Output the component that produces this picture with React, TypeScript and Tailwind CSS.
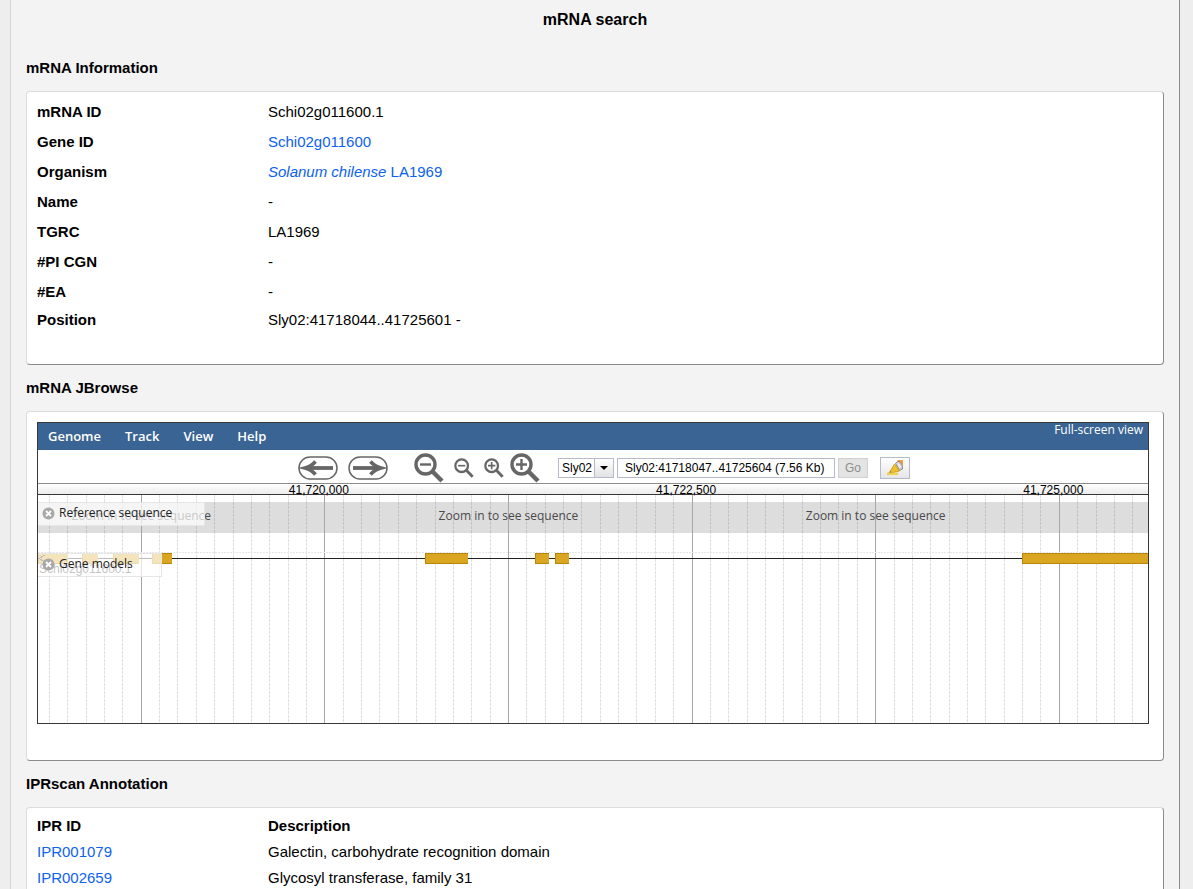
import type { ReactNode } from "react";

const START = 41718047;
const END = 41725604;

// position of a base inside the visible range
const pct = (bp: number) => `${((bp - START) / (END - START)) * 100}%`;
const span = (a: number, b: number) => `${((b - a) / (END - START)) * 100}%`;

const range = (from: number, step: number) => {
  const out: number[] = [];
  for (let bp = from; bp < END; bp += step) out.push(bp);
  return out;
};

const majorTicks = range(41718750, 1250);
const minorTicks = range(41718125, 125).filter((bp) => !majorTicks.includes(bp));
const rulerTicks = range(41720000, 2500);
const sequenceBlocks = range(41718750, 2500);

const exons = [
  [41718047, 41718251],
  [41718347, 41718455],
  [41718558, 41718735],
  [41718823, 41718959],
  [41720682, 41720974],
  [41721431, 41721526],
  [41721567, 41721662],
  [41724746, 41725604],
];

const info: { label: string; value: ReactNode }[] = [
  { label: "mRNA ID", value: "Schi02g011600.1" },
  { label: "Gene ID", value: <Link>Schi02g011600</Link> },
  {
    label: "Organism",
    value: (
      <Link>
        <i>Solanum chilense</i> LA1969
      </Link>
    ),
  },
  { label: "Name", value: "-" },
  { label: "TGRC", value: "LA1969" },
  { label: "#PI CGN", value: "-" },
  { label: "#EA", value: "-" },
];

const iprscan = [
  { id: "IPR001079", description: "Galectin, carbohydrate recognition domain" },
  { id: "IPR002659", description: "Glycosyl transferase, family 31" },
];

function Link({ children }: { children: ReactNode }) {
  return (
    <a href="#" className="text-[#0d62ee]">
      {children}
    </a>
  );
}

function Section({ title, className, children }: { title: string; className: string; children: ReactNode }) {
  return (
    <section>
      <h2 className="font-bold leading-[46px]">{title}</h2>
      <div
        className={`rounded border border-t-[#dcdcdc] border-l-[#dcdcdc] border-r-[#8c8c8c] border-b-[#8c8c8c] bg-white px-2.5 ${className}`}
      >
        {children}
      </div>
    </section>
  );
}

function PanIcon({ flip }: { flip?: boolean }) {
  return (
    <svg width="40" height="24" viewBox="0 0 40 24" fill="none" stroke="#666" className={flip ? "-scale-x-100" : ""}>
      <rect x="1" y="1" width="38" height="22" rx="11" strokeWidth="1.5" />
      <path d="M35 12H8" strokeWidth="3.8" />
      <path d="M17.5 5.5C15 8.5 11.5 10.8 7 12C11.5 13.2 15 15.5 17.5 18.5" strokeWidth="3.6" />
    </svg>
  );
}

function ZoomIcon({ size, plus }: { size: number; plus?: boolean }) {
  return (
    <svg width={size} height={size} viewBox="0 0 30 30" fill="none" stroke="#666">
      <circle cx="11.5" cy="11.5" r="9.5" strokeWidth="3.4" />
      <path d="M18.5 18.5L28 28" strokeWidth="4.4" />
      <path d={plus ? "M6 11.5H17M11.5 6V17" : "M6 11.5H17"} strokeWidth="2.4" />
    </svg>
  );
}

function HighlighterIcon() {
  return (
    <svg width="18" height="16" viewBox="0 0 18 16">
      <path d="M11 0H17V6Z" fill="#f79a3c" />
      <path d="M9.5 3.5Q11 1 13 1.5Q17 4 16.5 9L13.5 10.5Z" fill="#cfcfcf" stroke="#8a8a8a" strokeWidth="1" />
      <path d="M12 3.5L14.5 7.5" stroke="#f4f4f4" strokeWidth="1.5" />
      <path d="M8.5 4L13.5 11L5.5 12.8L4 11.5Z" fill="#efc02c" stroke="#c89a1c" strokeWidth="0.8" />
      <path d="M4.5 10.5L6 12.8L2 13.5Z" fill="#a8913a" />
      <path d="M1 13.8H12" stroke="#f3cf45" strokeWidth="2.2" />
    </svg>
  );
}

function TrackLabel({ name, className }: { name: string; className: string }) {
  return (
    <div
      className={`absolute left-0 flex h-6 items-center gap-1 border border-l-0 border-[#e6e6e6] bg-white/70 pb-0.5 pl-1 text-[#222] ${className}`}
    >
      <button type="button" aria-label={`Close ${name}`}>
        <svg width="13" height="13" viewBox="0 0 13 13">
          <circle cx="6.5" cy="6.5" r="6" fill="#a8a8a8" />
          <path d="M4 4L9 9M9 4L4 9" stroke="#fff" strokeWidth="1.8" />
        </svg>
      </button>
      {name}
    </div>
  );
}

function Tracks() {
  return (
    <div className="relative text-xs">
      <svg className="block h-[228px] w-full" shapeRendering="crispEdges">
        <rect y="7" width="100%" height="31" fill="#dddddd" />
        {minorTicks.map((bp) => (
          <g key={bp} strokeDasharray="3 1">
            <line x1={pct(bp)} x2={pct(bp)} y1="0" y2="228" stroke="#dfdfdf" />
            <line x1={pct(bp)} x2={pct(bp)} y1="7" y2="38" stroke="#c2c2c2" />
          </g>
        ))}
        {majorTicks.map((bp) => (
          <line key={bp} x1={pct(bp)} x2={pct(bp)} y1="0" y2="228" stroke="#a6a6a6" />
        ))}
        {sequenceBlocks.map((bp) => (
          <text key={bp} x={pct(bp)} y="25" textAnchor="middle" fill="#4a4a4a">
            Zoom in to see sequence
          </text>
        ))}
        <line x1="0" x2="100%" y1="57.5" y2="57.5" stroke="#e6e6e6" strokeDasharray="2 1" />
        <line x1="0" x2="100%" y1="63.5" y2="63.5" stroke="#222" />
        {exons.map(([a, b]) => (
          <g key={a}>
            <rect x={pct(a)} y="58" width={span(a, b)} height="11" fill="#b8860b" />
            <svg x={pct(a)} y="59" width={span(a, b)} height="9">
              <rect x="1" width="100%" height="9" fill="#daa520" />
            </svg>
          </g>
        ))}
        <path d="M7 60L1 63.5L7 67" fill="none" stroke="#222" />
        <text x="1" y="78" className="font-['Liberation_Sans',sans-serif]" fill="#333">
          Schi02g011600.1
        </text>
      </svg>
      <TrackLabel name="Reference sequence" className="top-[7px] w-[167px]" />
      <TrackLabel name="Gene models" className="top-[58px] w-[124px]" />
    </div>
  );
}

function Browser() {
  return (
    <div className="mr-1 border border-[#3a3638] font-['Open_Sans',sans-serif]">
      <nav className="flex h-[27px] items-center gap-6 bg-[#396494] pr-[5px] pl-2.5 text-[13px] font-semibold text-white">
        <button type="button">Genome</button>
        <button type="button">Track</button>
        <button type="button">View</button>
        <button type="button">Help</button>
        <a href="#" className="ml-auto self-start text-xs leading-[14px] font-medium">
          Full-screen view
        </a>
      </nav>

      <div className="flex h-[33px] items-center justify-center pt-0.5 pl-[22px] font-['Liberation_Sans',sans-serif] text-xs">
        <button type="button" aria-label="Pan left" className="mr-2.5">
          <PanIcon />
        </button>
        <button type="button" aria-label="Pan right" className="mr-[26px]">
          <PanIcon flip />
        </button>
        <button type="button" aria-label="Zoom out a lot" className="mr-2.5">
          <ZoomIcon size={30} />
        </button>
        <button type="button" aria-label="Zoom out" className="mr-2.5">
          <ZoomIcon size={20} />
        </button>
        <button type="button" aria-label="Zoom in" className="mr-1.5">
          <ZoomIcon size={20} plus />
        </button>
        <button type="button" aria-label="Zoom in a lot" className="mr-[18px]">
          <ZoomIcon size={30} plus />
        </button>
        <div className="relative mr-[3px]">
          <select aria-label="Reference" className="h-5 w-14 appearance-none border border-[#b5bcc7] bg-white pl-[3px]">
            <option>Sly02</option>
          </select>
          <span className="pointer-events-none absolute inset-y-px right-px flex w-[19px] items-center justify-center border-l border-[#b5bcc7] bg-linear-to-b from-white to-[#e2e2e2]">
            <svg width="8" height="4" viewBox="0 0 8 4">
              <path d="M0 0H8L4 4Z" fill="#000" />
            </svg>
          </span>
        </div>
        <input
          aria-label="Location"
          defaultValue="Sly02:41718047..41725604 (7.56 Kb)"
          className="mr-[3px] h-5 w-[218px] border border-[#b5bcc7] bg-white px-[7px]"
        />
        <button type="button" className="mr-3 h-5 border border-[#d0d0d0] bg-[#e4e4e4] px-[6px] text-[#8c8c8c]">
          Go
        </button>
        <button
          type="button"
          aria-label="Highlight a region"
          className="flex h-[22px] w-[30px] items-center justify-center border border-[#b5bcc7] bg-linear-to-b from-white to-[#e6e6e6]"
        >
          <HighlighterIcon />
        </button>
      </div>

      <svg className="block h-3 w-full overflow-visible border-t border-b border-t-[#8c8c8c] border-b-[#3a3638] bg-linear-to-b from-white to-[#ececec] font-['Liberation_Sans',sans-serif] text-xs">
        {rulerTicks.map((bp) => (
          <text key={bp} x={pct(bp)} dx="-6" y="10" textAnchor="middle">
            {bp.toLocaleString("en-US")}
          </text>
        ))}
      </svg>
      <Tracks />
    </div>
  );
}

export default function App() {
  return (
    <div className="min-h-screen bg-[#eeeeee] pr-[13px] pl-2.5 font-['Liberation_Sans',Arial,sans-serif] text-[15px] text-black">
      <main className="min-h-screen border-r border-l border-r-[#8c8c8c] border-l-[#d6d6d6] bg-[#f3f3f3] px-[15px]">
        <h1 className="mb-[5px] text-center text-base leading-10 font-bold">mRNA search</h1>

        <Section title="mRNA Information" className="pt-[5px] pb-[31px]">
          <table className="w-full text-left">
            <tbody>
              {info.map((row) => (
                <tr key={row.label} className="h-[30px]">
                  <th className="w-[231px]">{row.label}</th>
                  <td>{row.value}</td>
                </tr>
              ))}
              <tr className="h-[26px]">
                <th>Position</th>
                <td>Sly02:41718044..41725601 -</td>
              </tr>
            </tbody>
          </table>
        </Section>

        <Section title="mRNA JBrowse" className="pt-2.5 pb-9">
          <Browser />
        </Section>

        <Section title="IPRscan Annotation" className="pt-[5px] pb-8">
          <table className="w-full text-left">
            <thead>
              <tr className="h-[26px]">
                <th className="w-[231px]">IPR ID</th>
                <th>Description</th>
              </tr>
            </thead>
            <tbody>
              {iprscan.map((row) => (
                <tr key={row.id} className="h-[26px]">
                  <td>
                    <Link>{row.id}</Link>
                  </td>
                  <td>{row.description}</td>
                </tr>
              ))}
            </tbody>
          </table>
        </Section>
      </main>
    </div>
  );
}
